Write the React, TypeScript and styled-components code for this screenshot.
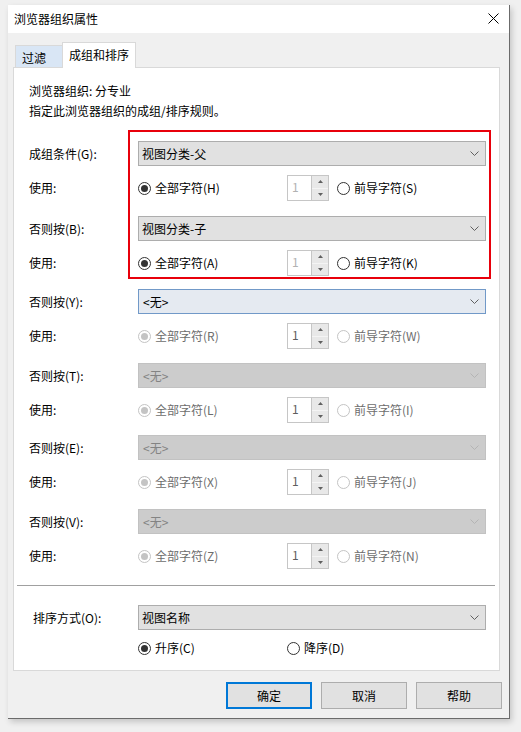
import React from "react";
import styled, { createGlobalStyle, css } from "styled-components";

const GlobalStyle = createGlobalStyle`
    body {
        margin: 0;
        background: #f0f0f0;
        font-family: "Noto Sans CJK SC", "Microsoft YaHei", sans-serif;
        font-size: 12px;
        color: #000;
    }
`;

const Screen = styled.div`
    padding: 5px 0 0 8px;
    height: 732px;
    box-sizing: border-box;
`;

const Window = styled.div`
    width: 501px;
    height: 713px;
    background: #f0f0f0;
    border-right: 1px solid #6b6b6b;
    border-bottom: 1px solid #6b6b6b;
    box-shadow: 2px 3px 6px rgba(0, 0, 0, 0.18);
    display: flex;
    flex-direction: column;
`;

const TitleBar = styled.div`
    height: 28px;
    background: #fff;
    display: flex;
    align-items: center;
    justify-content: space-between;
    padding: 0 0 2px 6px;
    box-sizing: border-box;
`;

const CloseButton = styled.div`
    width: 32px;
    height: 26px;
    display: flex;
    align-items: center;
    justify-content: center;
`;

const Body = styled.div`
    padding: 9px 0 0 5px;
    display: flex;
    flex-direction: column;
`;

const TabRow = styled.div`
    display: flex;
    align-items: flex-end;
    height: 25px;
    padding-left: 2px;
    position: relative;
    z-index: 1;
`;

const Tab = styled.div<{ $active?: boolean }>`
    box-sizing: border-box;
    border: 1px solid #d9d9d9;
    border-bottom: none;
    display: flex;
    align-items: center;
    ${(p) =>
        p.$active
            ? css`
                  height: 26px;
                  width: 74px;
                  background: #fff;
                  padding: 0 0 3px 6px;
                  margin-bottom: -1px;
              `
            : css`
                  height: 22px;
                  width: 47px;
                  background: #d9e6f5;
                  padding: 2px 0 0 6px;
                  border-right: none;
              `}
`;

const Panel = styled.div`
    width: 487px;
    height: 604px;
    box-sizing: border-box;
    border: 1px solid #d9d9d9;
    background: #fff;
    position: relative;
    padding-top: 13px;
`;

const Info = styled.div`
    padding-left: 15px;
    line-height: 20px;
`;

const Highlight = styled.div`
    position: absolute;
    left: 114px;
    top: 62px;
    width: 359px;
    height: 145px;
    border: 2px solid #e8000b;
`;

const GroupList = styled.div`
    margin-top: 20px;
    padding-left: 15px;
    display: flex;
    flex-direction: column;
`;

const Row = styled.div<{ $labelWidth: number; $height: number }>`
    display: grid;
    grid-template-columns: ${(p) => p.$labelWidth}px 348px;
    align-items: center;
    height: ${(p) => p.$height}px;
`;

const Group = styled.div<{ $gap: number }>`
    display: flex;
    flex-direction: column;
    gap: 9px;
    margin-top: ${(p) => p.$gap}px;
`;

const Label = styled.span`
    line-height: 16px;
`;

const Combo = styled.div<{ $variant: "normal" | "focus" | "disabled" }>`
    height: 25px;
    box-sizing: border-box;
    display: flex;
    align-items: center;
    justify-content: space-between;
    padding: 0 6px 0 3px;
    line-height: 16px;
    ${(p) =>
        p.$variant === "normal"
            ? css`
                  background: #e1e1e1;
                  border: 1px solid #adadad;
                  color: #000;
              `
            : p.$variant === "focus"
            ? css`
                  background: #e5eaf1;
                  border: 1px solid #7199c8;
                  color: #000;
                  padding-left: 4px;
              `
            : css`
                  background: #cccccc;
                  border: 1px solid #c2c2c2;
                  color: #838383;
                  padding-left: 4px;
              `}
`;

const UseLine = styled.div`
    display: flex;
    align-items: center;
    height: 26px;
`;

const Choice = styled.label<{ $width?: number; $disabled?: boolean }>`
    display: flex;
    align-items: center;
    gap: 4px;
    line-height: 16px;
    width: ${(p) => (p.$width ? `${p.$width}px` : "auto")};
    color: ${(p) => (p.$disabled ? "#6d6d6d" : "#000")};
`;

const RadioDot = styled.span<{ $checked?: boolean; $disabled?: boolean }>`
    width: 13px;
    height: 13px;
    box-sizing: border-box;
    border-radius: 50%;
    border: 1px solid ${(p) => (p.$disabled ? "#c4c4c4" : "#333")};
    background: #fff;
    display: flex;
    align-items: center;
    justify-content: center;
    flex: none;
    &::after {
        content: "";
        width: 7px;
        height: 7px;
        border-radius: 50%;
        background: ${(p) => (p.$disabled ? "#c4c4c4" : "#333")};
        display: ${(p) => (p.$checked ? "block" : "none")};
    }
`;

const Spinner = styled.div`
    width: 42px;
    height: 26px;
    box-sizing: border-box;
    border: 1px solid #c6c6c6;
    display: flex;
    margin-right: 8px;
`;

const SpinField = styled.div<{ $dim?: boolean }>`
    flex: 1;
    padding: 3px 0 0 4px;
    line-height: 16px;
    color: ${(p) => (p.$dim ? "#b2b2b2" : "#5e5e5e")};
`;

const SpinButtons = styled.div`
    width: 16px;
    border-left: 1px solid #c6c6c6;
    display: flex;
    flex-direction: column;
`;

const SpinHalf = styled.div<{ $down?: boolean }>`
    flex: 1;
    background: #e8e8e8;
    display: flex;
    align-items: center;
    justify-content: center;
    ${(p) => p.$down && "border-top: 1px solid #f4f4f4;"}
`;

const Separator = styled.div`
    height: 1px;
    background: #a0a0a0;
    margin: 16px 4px 0 3px;
`;

const SortSection = styled.div`
    margin-top: 19px;
    padding-left: 19px;
    display: flex;
    flex-direction: column;
    gap: 8px;
`;

const SortChoices = styled.div`
    grid-column: 2;
    display: flex;
    align-items: center;
`;

const ButtonRow = styled.div`
    display: flex;
    justify-content: flex-end;
    gap: 9px;
    margin: 11px 7px 0 0;
`;

const DialogButton = styled.div<{ $default?: boolean }>`
    width: 86px;
    height: 27px;
    box-sizing: border-box;
    background: #e1e1e1;
    border: ${(p) => (p.$default ? "2px solid #0078d7" : "1px solid #adadad")};
    display: flex;
    align-items: center;
    justify-content: center;
    line-height: 16px;
`;

const Chevron = ({ color }: { color: string }) => (
    <svg width="9" height="5" viewBox="0 0 9 5">
        <polyline points="0.5,0.5 4.5,4.5 8.5,0.5" fill="none" stroke={color} strokeWidth="1" />
    </svg>
);

const Arrow = ({ down }: { down?: boolean }) => (
    <svg width="5" height="3" viewBox="0 0 5 3">
        <polygon points={down ? "0,0 5,0 2.5,3" : "0,3 5,3 2.5,0"} fill="#606060" />
    </svg>
);

type Group = {
    label: string;
    value: string;
    variant: "normal" | "focus" | "disabled";
    all: string;
    lead: string;
    enabled: boolean;
    gap: number;
};

// gap = space above each group (from the previous spinner row)
const groups: Group[] = [
    { label: "成组条件(G):", value: "视图分类-父", variant: "normal", all: "全部字符(H)", lead: "前导字符(S)", enabled: true, gap: 0 },
    { label: "否则按(B):", value: "视图分类-子", variant: "normal", all: "全部字符(A)", lead: "前导字符(K)", enabled: true, gap: 15 },
    { label: "否则按(Y):", value: "<无>", variant: "focus", all: "全部字符(R)", lead: "前导字符(W)", enabled: false, gap: 13 },
    { label: "否则按(T):", value: "<无>", variant: "disabled", all: "全部字符(L)", lead: "前导字符(I)", enabled: false, gap: 14 },
    { label: "否则按(E):", value: "<无>", variant: "disabled", all: "全部字符(X)", lead: "前导字符(J)", enabled: false, gap: 12 },
    { label: "否则按(V):", value: "<无>", variant: "disabled", all: "全部字符(Z)", lead: "前导字符(N)", enabled: false, gap: 14 },
];

const chevronColor = (v: Group["variant"]) => (v === "disabled" ? "#b4b4b4" : "#606060");

const App: React.FC = () => {
    return (
        <>
            <GlobalStyle />
            <Screen>
                <Window>
                    <TitleBar>
                        <span>浏览器组织属性</span>
                        <CloseButton>
                            <svg width="11" height="11" viewBox="0 0 11 11">
                                <path d="M0.5 0.5 L10.5 10.5 M10.5 0.5 L0.5 10.5" stroke="#000" strokeWidth="1" />
                            </svg>
                        </CloseButton>
                    </TitleBar>
                    <Body>
                        <TabRow>
                            <Tab>过滤</Tab>
                            <Tab $active>成组和排序</Tab>
                        </TabRow>
                        <Panel>
                            <Info>
                                <div>浏览器组织: 分专业</div>
                                <div>指定此浏览器组织的成组/排序规则。</div>
                            </Info>
                            <GroupList>
                                {groups.map((g) => (
                                    <Group key={g.label} $gap={g.gap}>
                                        <Row $labelWidth={109} $height={25}>
                                            <Label>{g.label}</Label>
                                            <Combo $variant={g.variant}>
                                                <span>{g.value}</span>
                                                <Chevron color={chevronColor(g.variant)} />
                                            </Combo>
                                        </Row>
                                        <Row $labelWidth={109} $height={26}>
                                            <Label>使用:</Label>
                                            <UseLine>
                                                <Choice $width={149} $disabled={!g.enabled}>
                                                    <RadioDot $checked $disabled={!g.enabled} />
                                                    {g.all}
                                                </Choice>
                                                <Spinner>
                                                    <SpinField $dim={g.enabled}>1</SpinField>
                                                    <SpinButtons>
                                                        <SpinHalf>
                                                            <Arrow />
                                                        </SpinHalf>
                                                        <SpinHalf $down>
                                                            <Arrow down />
                                                        </SpinHalf>
                                                    </SpinButtons>
                                                </Spinner>
                                                <Choice $disabled={!g.enabled}>
                                                    <RadioDot $disabled={!g.enabled} />
                                                    {g.lead}
                                                </Choice>
                                            </UseLine>
                                        </Row>
                                    </Group>
                                ))}
                            </GroupList>
                            <Separator />
                            <SortSection>
                                <Row $labelWidth={105} $height={25}>
                                    <Label>排序方式(O):</Label>
                                    <Combo $variant="normal">
                                        <span>视图名称</span>
                                        <Chevron color="#606060" />
                                    </Combo>
                                </Row>
                                <Row $labelWidth={105} $height={20}>
                                    <SortChoices>
                                        <Choice $width={149}>
                                            <RadioDot $checked />
                                            升序(C)
                                        </Choice>
                                        <Choice>
                                            <RadioDot />
                                            降序(D)
                                        </Choice>
                                    </SortChoices>
                                </Row>
                            </SortSection>
                            <Highlight />
                        </Panel>
                        <ButtonRow>
                            <DialogButton $default>确定</DialogButton>
                            <DialogButton>取消</DialogButton>
                            <DialogButton>帮助</DialogButton>
                        </ButtonRow>
                    </Body>
                </Window>
            </Screen>
        </>
    );
};

export default App;
